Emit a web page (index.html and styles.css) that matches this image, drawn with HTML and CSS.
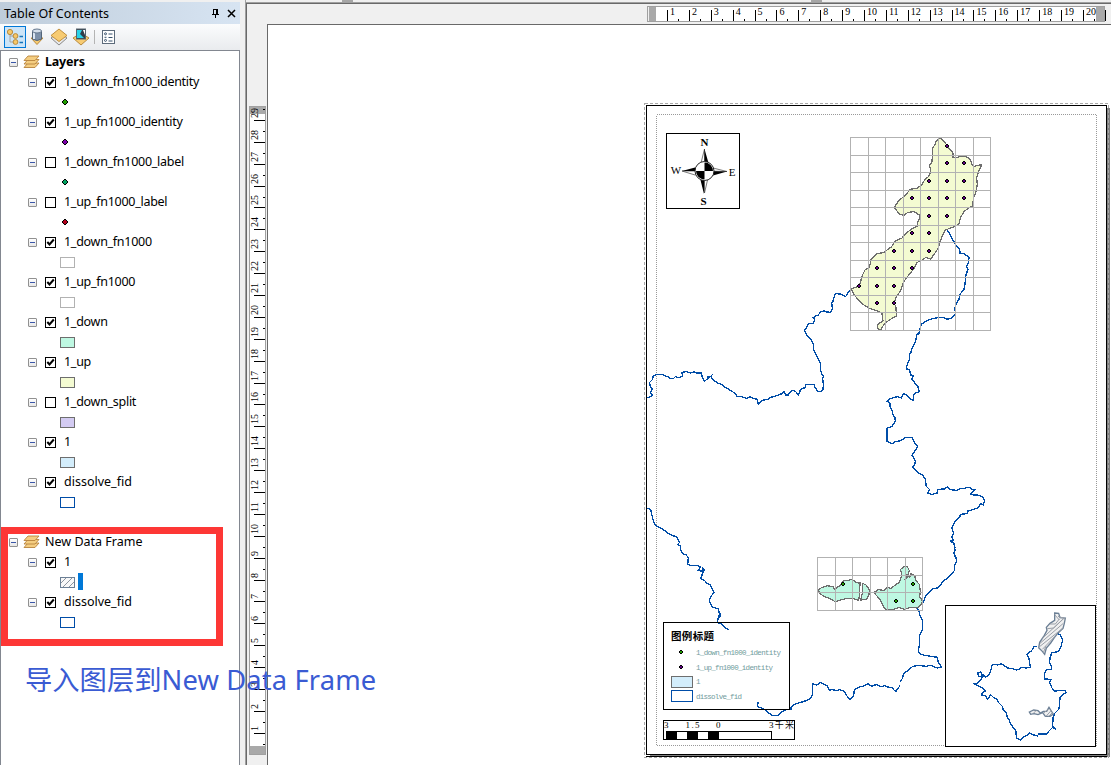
FILE: index.html
```html
<!DOCTYPE html>
<html lang="zh">
<head>
<meta charset="utf-8">
<title>Table Of Contents</title>
<link rel="stylesheet" href="styles.css">
</head>
<body>
<div class="app">
  <aside class="toc">
    <header class="titlebar">
      <span class="title">Table Of Contents</span>
      <svg class="pin" width="9" height="11" viewBox="0 0 9 11"><path d="M2.5 6V1.5H6.5V6M5.5 1V6M0.5 6.5H8M4.5 7V10" /></svg>
      <svg class="close" width="9" height="9" viewBox="0 0 9 9"><path d="M1 1L8 8M8 1L1 8"/></svg>
    </header>
    <div class="toolbar">
      <span class="tool active"><svg width="20" height="20" viewBox="0 0 20 20"><path d="M5 6V15H9M5 9H9" fill="none" stroke="#a4a4a4"/><circle cx="5" cy="5" r="2.6" fill="#f7c869" stroke="#b98a3c"/><circle cx="10.5" cy="9" r="2.4" fill="#f7c869" stroke="#b98a3c"/><circle cx="10.5" cy="15" r="2.4" fill="#f7c869" stroke="#b98a3c"/><path d="M14.5 9.5H18M14.5 15.5H18" stroke="#1673b9" stroke-width="1.5"/></svg></span>
      <span class="tool"><svg width="20" height="20" viewBox="0 0 20 20"><path d="M4 11L10 17.5L16 11Z" fill="#f7cb72" stroke="#b98a3c"/><path d="M5.5 4V12Q10 15 14.5 12V4Z" fill="#7d91aa" stroke="#536579"/><path d="M7 5V12" stroke="#dce6f2" stroke-width="2"/><ellipse cx="10" cy="4" rx="4.5" ry="2" fill="#d5dfeb" stroke="#65788e"/></svg></span>
      <span class="tool"><svg width="20" height="20" viewBox="0 0 20 20"><path d="M2 11L10 5L18 11L10 18Z" fill="#e8e8e8" stroke="#8a8a8a"/><path d="M2 8.5L10 2L18 8.5L10 14.5Z" fill="#f7cb72" stroke="#c18f3c"/></svg></span>
      <span class="tool"><svg width="20" height="20" viewBox="0 0 20 20"><path d="M2 11L10 6L18 11L10 18Z" fill="#f7cb72" stroke="#b98a3c"/><rect x="5.5" y="2" width="9" height="10" fill="#303d48" stroke="#56646f"/><path d="M6 3H11L9 7L13 11H6Z" fill="#29d3e8"/><path d="M12 3H14V8Z" fill="#fff"/></svg></span>
      <span class="divider"></span>
      <span class="tool"><svg width="20" height="20" viewBox="0 0 20 20"><rect x="3.500" y="3.5" width="12" height="13" fill="#fff" stroke="#5c6b7b"/><path d="M9.500 7H13.500M9.500 10.5H13.500M9.500 14H13.500" stroke="#37516c"/><circle cx="6.500" cy="6.8" r="1" fill="none" stroke="#37516c"/><circle cx="6.500" cy="13.4" r="1" fill="none" stroke="#37516c"/><path d="M5.500 10.3H7.500" stroke="#37516c"/></svg></span>
    </div>
    <div class="tree" id="tree"></div>
    <div class="highlight"></div>
  </aside>

  <main class="layout">
    <div class="topedge"><i class="nub nub-a"></i><i class="nub nub-b"></i></div>
    <div class="hruler"><div class="hscale" id="hscale"></div></div>
    <div class="work">
      <div class="vruler"><div class="vscale"><div class="vticks" id="vscale"></div></div></div>
      <svg class="canvas" width="843" height="740" viewBox="268 25 843 740">
        <!-- sheet, shadow and margins -->
        <rect x="1107" y="108" width="3" height="649" fill="#808080"/>
        <rect x="650" y="755" width="460" height="2" fill="#808080"/>
        <path d="M646 756.5H1107" stroke="#000"/>
        <rect x="644.5" y="103.5" width="464" height="654" class="print"/>
        <rect x="646.5" y="105.5" width="460" height="649" class="frame"/>
        <rect x="656.5" y="114.5" width="440" height="631" class="margin"/>

        <!-- catchment outlines -->
        <g transform="translate(640 220) scale(.33333)"><path class="river" d="M630 212L624 218 619 227 616 230 604 224 600 222 586 221 580 237 579 244 575 247 577 266 571 277 560 276 553 273 542 275 535 285 526 288 520 293 524 300 520 311 507 310 501 319 500 325 493 330 497 340 503 349 514 359 519 370 521 377 521 391 528 404 536 420 541 430 541 447 545 462 551 468 548 475 550 492 549 510 541 515 533 513 528 506 523 498 522 493 498 493 495 503 481 508 480 515 475 524 467 515 458 511 449 517 445 525 437 525 432 515 426 521 412 526 390 533 385 538 367 541 355 552 351 538 337 534 331 530 319 535 305 530 291 529 285 520 273 512 253 500 248 494 235 490 227 485 219 479 214 472 215 467 208 472 203 470 205 476 193 483 187 472 184 459 170 459 162 456 151 459 140 455 126 457 127 468 117 473 106 470 101 475 91 475 84 470 74 467 67 464 48 464 40 467 38 478 29 487 31 500 38 506 32 518 37 526 28 532 22 532"/></g>
        <g transform="translate(840 125) scale(.33333)"><path class="river" d="M320 312L329 327 340 347 347 360 359 371 360 384 373 387 387 397 386 411 380 424 384 432 377 453 375 476 372 493 359 509 357 524 349 534 345 547 346 568 331 581 320 583 309 577 294 578 276 581 258 588 245 597 241 604 239 624 230 630 227 648 222 659"/></g>
        <g transform="translate(860 320) scale(.33333)"><path class="river" d="M181 22L179 37 171 43 166 67 155 86 153 97 148 101 148 120 139 140 141 147 148 150 153 165 160 168 155 176 160 182 167 192 173 198 178 215 165 219 160 225 160 241 152 238 145 229 130 220 124 234 112 230 100 233 88 237 82 244 90 249 90 259 96 270 99 284 105 293 106 304 96 319 81 325 81 364 96 372 105 365 123 362 136 353 157 352 163 368 173 379 166 391 156 405 166 424 163 437 157 442 175 458 188 466 197 479 198 498 208 508 204 519 215 524 231 519 234 508 253 507 263 500 270 509 289 511 302 506 315 505 321 502 332 503 334 509 344 510 335 518 332 524 359 526 368 531 374 544 369 555 363 551 353 564 324 573 321 581 302 583 299 591 285 603 276 624 281 641 276 651 279 660 271 663 283 672 285 691 283 705 289 718"/></g>
        <g transform="translate(900 540) scale(.33333)"><path class="river" d="M151 3L161 8 165 22 162 40 167 50 170 63 163 76 164 91 149 107 143 115 132 121 119 138 113 144 99 146 90 155 77 168 69 188M50 201L56 211 60 227 68 244 67 270 59 286 59 310 55 331 59 341 73 346 113 352 114 366 125 381 112 384 92 376 78 379 54 376 37 380 26 390 10 401 8 414 0 426"/></g>
        <g transform="translate(640 610) scale(.33333)"><path class="river" d="M780 227L768 244 762 240 758 233 743 231 734 226 723 231 710 223 695 229 684 221 674 227 659 231 643 239 641 258 630 268 621 258 613 244 598 239 588 242 579 239 568 240 560 226 541 217 531 225 518 221 518 254 513 263 503 270 490 275 475 279 461 284 453 291 453 297 438 299 423 307 416 316 398 317 383 307 374 298 358 292 352 287 355 275M235 1L239 13 232 29 234 38 246 43 256 53 266 59"/></g>
        <g transform="translate(640 490) scale(.33333)"><path class="river" d="M22 55L32 58 35 72 39 88 43 100 50 109 63 115 74 122 84 130 102 138 112 143 118 158 113 163 121 168 123 182 128 191 139 195 145 204 143 223 155 227 173 227 182 231 175 241 187 244 187 234 193 240 181 266 194 272 200 279 212 286 222 307 211 322 208 332 217 351 234 356 242 375 233 390"/></g>

        <!-- upper catchment -->
        <path class="basin up" transform="translate(840 125) scale(.33333)" d="M300 39L310 46 321 61 331 75 339 84 339 97 355 97 362 93 373 94 384 97 393 108 396 119 401 124 425 119 417 138 413 150 410 157 412 178 407 204 401 216 398 242 387 249 372 259 361 279 357 295 346 304 331 309 315 316 308 330 299 352 295 369 281 390 272 402 258 397 248 404 232 412 221 432 208 448 191 470 181 498 169 516 162 533 168 547 169 573 151 583 136 594 126 607 123 614 112 611 114 598 129 587 126 565 110 557 89 550 67 537 50 519 38 502 34 492 58 483 67 451 75 435 88 428 93 404 110 386 130 383 154 366 167 347 185 340 200 324 216 311 231 304 234 288 240 279 237 269 222 260 204 262 192 271 178 267 163 247 175 229 187 218 199 207 211 193 232 189 244 181 254 165 267 153 272 139 269 121 276 110 278 82 277 69 285 60 288 48Z"/>
        <!-- lower catchment -->
        <g transform="translate(640 490) scale(.33333)">
          <path class="basin down" d="M534 301L544 293 562 287 580 291 583 299 599 287 610 273 635 269 646 274 647 278 660 279 659 307 656 331 639 326 619 326 600 330 587 336 572 327 551 319 541 311ZM668 280L678 285 688 299 687 315 679 328 662 330 667 311ZM703 307L715 299 732 301 742 292 753 295 765 286 779 276 785 257 782 238 792 229 802 230 808 242 804 253 809 261 813 251 825 257 826 270 838 283 841 305 839 320 848 334 843 344 831 354 813 352 795 358 777 353 757 359 737 358 728 346 721 329 708 315Z"/>
          <path class="basin" d="M793 270L799 262 798 253M795 249L804 259 797 266M688 307H703"/>
        </g>

        <path class="grid" d="M850.5 137V331M868.5 137V331M885.5 137V331M903.5 137V331M920.5 137V331M938.5 137V331M955.5 137V331M973.5 137V331M990.5 137V331M850 137.5H991M850 155.5H991M850 172.5H991M850 190.5H991M850 207.5H991M850 225.5H991M850 242.5H991M850 260.5H991M850 277.5H991M850 295.5H991M850 312.5H991M850 330.5H991M817.5 557V611M835.5 557V611M852.5 557V611M870.5 557V611M887.5 557V611M905.5 557V611M922.5 557V611M817 557.5H923M817 575.5H923M817 592.5H923M817 610.5H923"/>
        <g id="points"></g>

        <!-- compass -->
        <rect x="666.5" y="133.5" width="73" height="75" class="frame white"/>
        <g class="compass">
          <path class="fine" d="M704.5 149L701 163 704.5 171ZM704.5 193L707.5 180 704.5 171ZM682 171L695 175 704 171ZM727 171.500L713 168 704 171Z"/>
          <path d="M704.5 149L708.500 163 704.5 171ZM704 194L700.5 180 704.5 171ZM682 171L695 167.500 704 171ZM727 171.500L713 175.500 704 171Z"/>
          <circle class="fine ring" cx="704.5" cy="171" r="9.500"/>
          <path d="M704.500 171V162.500A8.500 8.500 0 0 1 713 171ZM704.500 171V179.500A8.500 8.500 0 0 1 696 171Z"/>
          <text x="704.500" y="146" class="bold">N</text><text x="676" y="174">W</text><text x="732" y="176">E</text><text x="703.500" y="205" class="bold">S</text>
        </g>

        <!-- legend -->
        <g class="frame"><rect x="663.5" y="622.5" width="126" height="87"/></g>
        <text x="671" y="639.500" class="legend-title" textLength="43">图例标题</text>
        <g class="legend">
          <text x="696" y="655" textLength="85">1_down_fn1000_identity</text>
          <text x="696" y="670" textLength="77">1_up_fn1000_identity</text>
          <text x="696" y="684">1</text>
          <text x="696" y="699" textLength="46">dissolve_fid</text>
        </g>
        <rect x="671.5" y="676.5" width="21" height="11" fill="#d3edfb" stroke="#6e6e6e" shape-rendering="crispEdges"/>
        <rect x="671.5" y="690.5" width="21" height="11" fill="#fff" stroke="#004da8" shape-rendering="crispEdges"/>

        <!-- scale bar -->
        <rect x="663.5" y="720.5" width="131" height="19" class="frame"/>
        <rect x="666.5" y="731.5" width="105" height="8" class="frame"/>
        <path d="M666 731H677V740H666ZM687 731H698V740H687ZM708 731H719V740H708Z"/>
        <g class="scale"><text x="664" y="728">3</text><text x="685.500" y="728" textLength="14">1.5</text><text x="716" y="728">0</text><text x="769" y="728" textLength="25">3千米</text></g>

        <!-- overview frame -->
        <rect x="945.5" y="605.5" width="150" height="141" class="frame white"/>
        <g transform="translate(900 540) scale(.33333)">
          <path class="river" d="M412 320L402 319 395 332 380 343 387 356 391 382 379 384 365 382 358 387 350 390 336 386 322 384 311 375 303 371 293 375 284 373 276 376 272 392 265 407 257 411 250 403 244 410 235 408 233 398 241 396 246 402 249 410 240 421 233 430 223 432 235 438 248 444 256 453 246 459 246 467 256 467 263 478 269 471 271 463 281 473 290 478 295 487 307 499 310 510 318 517 322 532 328 540 332 553 342 565 348 573 349 594 362 600 371 590 384 585 388 578 399 584 412 588 416 582 441 582 447 573 457 563 468 568 458 560 459 533 464 520 477 507 479 482 481 470 487 465 498 458 494 451 476 451 463 454 456 444 449 428 454 418 435 417 433 404 439 388 454 388 455 378 449 370 450 352 456 338 475 335 483 319 488 300 480 284 472 279"/>
          <g class="hatch">
            <path d="M464 219L476 220 480 233 496 234 493 250 489 265 475 278 463 293 452 309 439 324 434 343 427 334 416 323 419 307 433 286 441 271 439 262 450 250 464 241Z"/>
            <path class="thin" d="M464 224L478 240M450 252L466 252 478 237M442 266L461 264 488 238M427 295L492 235M420 310L490 250M416 322L488 265M427 328L464 290M474 229L496 236M430 338L438 318"/>
            <path d="M388 516L401 510 414 512 421 519 430 514 440 514 447 502 454 513 460 522 450 529 436 529 428 518 414 524 402 521 392 523Z"/>
            <path class="thin" d="M400 520L409 511M431 519L445 508M438 529L455 510M446 529L457 518"/>
          </g>
        </g>
      </svg>
    </div>
  </main>
  <div class="note">导入图层到<span>New Data Frame</span></div>
</div>
<script src="app.js"></script>
</body>
</html>
```
FILE: styles.css
```css
* { box-sizing: border-box; }
body { margin: 0; background: #f0f0f0; font-family: "Noto Sans", "Noto Sans CJK SC", sans-serif; color: #000; }
svg { display: block; flex: none; }
.app { position: relative; display: flex; width: 1111px; height: 765px; overflow: hidden; }
.toc { position: relative; display: flex; flex-direction: column; width: 240px; flex: none; padding-top: 2px; }
.titlebar { display: flex; align-items: center; height: 22px; padding: 0 4px; background: linear-gradient(90deg, #bfcddb, #d7e4f2); }
.title { flex: 1; font-size: 12.5px; letter-spacing: .04px; white-space: nowrap; }
.titlebar svg { fill: none; stroke: #000; }
.pin { margin-right: 7px; shape-rendering: crispEdges; }
.close { stroke-width: 1.5; }
.toolbar { display: flex; align-items: center; height: 26px; padding-left: 4px; background: linear-gradient(#fbfcfd, #e9ebee); }
.tool { display: flex; align-items: center; justify-content: center; width: 22px; height: 22px; }
.tool.active { border: 1px solid #0078d7; background: #cce4f7; }
.divider { width: 1px; height: 14px; margin: 0 3px 0 2px; background: #b4b4b4; }
.tree { flex: 1; padding-top: 1px; border: 1px solid #828790; border-bottom: 0; background: #fff; font-size: 12.5px; }
.row { display: flex; align-items: center; height: 20px; white-space: nowrap; }
.row.group { padding-left: 8px; }
.row.layer { padding-left: 27px; }
.row.symbol { padding-left: 59px; }
.row.strong { font-weight: 700; letter-spacing: -.2px; }
.label { display: block; line-height: 20px; }
.layer .label { margin-left: 8px; }
.layer .tight { letter-spacing: -.28px; }
.group .label { margin-left: 5px; }
.toggle { position: relative; width: 9px; height: 9px; flex: none; border: 1px solid #919191; border-radius: 1px; background: linear-gradient(#fff, #e6e6e6); }
.toggle::after { content: ""; display: block; width: 5px; height: 1px; margin: 3px 1px; background: #3a57a8; }
.stack { margin-left: 5px; }
.check { width: 11px; height: 11px; margin-left: 8px; flex: none; border: 1px solid #000; background: #fff; }
.check svg { fill: none; stroke: #000; stroke-width: 2; }
.swatch { width: 15px; height: 11px; border: 1px solid; }
.cursor { width: 5px; height: 17px; margin: -2px 0 0 3px; background: #0078d7; }
.highlight { position: absolute; left: 1px; top: 527px; width: 222px; height: 119px; border: 7px solid #fd3735; }
.layout { display: flex; flex-direction: column; width: 866px; margin-left: 5px; border-left: 1px solid #a0a0a0; }
.topedge { position: relative; height: 4px; flex: none; border-bottom: 1px solid #696969; box-shadow: inset 0 -1px #a0a0a0; }
.nub { position: absolute; top: 0; height: 2px; width: 11px; background: #a6a6a6; }
.nub-a { left: 96px; }
.nub-b { left: 565px; }
.hruler { height: 19px; flex: none; padding: 2px 0 0 400px; border-left: 1px solid #696969; overflow: hidden; }
.hscale { display: flex; position: relative; width: 458px; height: 16px; padding-left: 19px; border: 1px solid #a0a0a0; background: linear-gradient(90deg, transparent 1px, #a9a9a9 1px, #a9a9a9 8px, #fff 8px, #fff 448px, #a9a9a9 448px); font: 10px/10px "Liberation Serif", serif; }
.hcell { position: relative; width: 21.9px; height: 11px; margin-top: 3px; padding-left: 2px; flex: none; border-left: 1px solid #000; }
.hcell span { display: block; margin-top: -3px; }
.hcell::after { content: ""; position: absolute; left: 10px; bottom: 0; width: 1px; height: 2px; background: #000; }
.work { display: flex; flex: 1; min-height: 0; border-left: 1px solid #696969; }
.vruler { width: 21px; flex: none; padding: 82px 0 0 2px; border-top: 1px solid #f0f0f0; }
.vscale { width: 17px; height: 649px; overflow: hidden; border: 1px solid #a0a0a0; background: linear-gradient(#a9a9a9 7px, #fff 7px, #fff 639px, #a9a9a9 639px); font: 10px/10px "Liberation Serif", serif; }
.vticks { margin-top: -8px; }
.vcell { position: relative; display: flex; align-items: flex-end; height: 21.9px; padding: 0 0 3px 0; }
.vcell span { writing-mode: vertical-rl; transform: rotate(180deg); height: 12px; text-align: left; }
.vcell::before { content: ""; position: absolute; left: 4px; bottom: 0; width: 11px; height: 1px; background: #000; }
.vcell::after { content: ""; position: absolute; left: 13px; top: 10px; width: 2px; height: 1px; background: #000; }
.vcell.last::before { display: none; }
.canvas { background: #fff; outline: 1px solid #696969; margin-top: 2px; }
.frame { fill: none; stroke: #000; shape-rendering: crispEdges; }
.white { fill: #fff; }
.print { fill: none; stroke: #a8a8a8; stroke-dasharray: 3 2; shape-rendering: crispEdges; }
.margin { fill: none; stroke: #999; stroke-dasharray: 1 1; shape-rendering: crispEdges; }
.river { fill: none; stroke: #004da8; stroke-width: 4; shape-rendering: crispEdges; }
.basin { fill: none; stroke: #6e6e6e; stroke-width: 3.8; shape-rendering: crispEdges; }
.basin.up { fill: #f4fbd2; }
.basin.down { fill: #bef8e2; }
.grid { fill: none; stroke: #b2b2b2; shape-rendering: crispEdges; }
.compass text { font: 11px "Liberation Serif", serif; text-anchor: middle; }
.compass .bold { font-weight: 700; }
.fine { fill: #fff; stroke: #222; stroke-width: .6; }
.ring { stroke-width: 1; }
.legend-title { font: 700 10.5px "Noto Sans CJK SC", sans-serif; }
.legend { font: 7.5px "Liberation Mono", monospace; fill: #719b9d; }
.scale { font: 9px "Liberation Serif", "Noto Sans CJK SC", serif; }
.hatch { fill: #f0f0f0; stroke: #6b7f95; stroke-width: 4; }
.hatch .thin { fill: none; stroke: #9a9fa8; stroke-width: 3; }
.note { position: absolute; left: 25px; top: 660px; font-size: 27.3px; line-height: 40px; color: #3a5bd3; white-space: nowrap; }
.note span { letter-spacing: .15px; }
```
FILE: app.js
```js
const stack = '<svg class="stack" width="17" height="14" viewBox="0 0 17 14"><g fill="#f4cd80" stroke="#b8833d" stroke-width=".9"><path d="M1 12.500L5 8H16L12 12.500Z"/><path d="M1 9L5 4.500H16L12 9Z"/><path d="M1 5.500L5 1H16L12 5.500Z"/></g></svg>';
const tick = '<svg width="9" height="9" viewBox="0 0 9 9"><path d="M1.300 4L3.500 6.500L7.800 1.500"/></svg>';
const toggle = '<i class="toggle"></i>';
const group = (name, strong) => `<div class="row group ${strong ? 'strong' : ''}">${toggle}${stack}<span class="label">${name}</span></div>`;
const layer = (name, on) => `<div class="row layer">${toggle}<i class="check">${on ? tick : ''}</i><span class="label ${name.startsWith('1_') ? 'tight' : ''}">${name}</span></div>`;
const dot = c => `<div class="row symbol"><svg width="11" height="8" viewBox="0 0 11 8"><path d="M5 1L8 4L5 7L2 4Z" fill="${c}" stroke="#000"/></svg></div>`;
const box = (fill, line) => `<div class="row symbol"><i class="swatch" style="background:${fill};border-color:${line}"></i></div>`;
const hatch = '<div class="row symbol"><svg width="15" height="11" viewBox="0 0 15 11"><rect x=".5" y=".5" width="14" height="10" fill="#f8f8f8" stroke="#6b7f95"/><path d="M1 6L6 1M3 10L12 1M9 10L14 5" fill="none" stroke="#8c949e"/></svg><i class="cursor"></i></div>';
document.getElementById('tree').innerHTML = [
  group('Layers', true),
  layer('1_down_fn1000_identity', 1), dot('#1f9c00'),
  layer('1_up_fn1000_identity', 1), dot('#7a00a8'),
  layer('1_down_fn1000_label', 0), dot('#00a05f'),
  layer('1_up_fn1000_label', 0), dot('#b0001c'),
  layer('1_down_fn1000', 1), box('#fff', '#b2b2b2'),
  layer('1_up_fn1000', 1), box('#fff', '#b2b2b2'),
  layer('1_down', 1), box('#bef8e2', '#6e6e6e'),
  layer('1_up', 1), box('#f4fbd2', '#6e6e6e'),
  layer('1_down_split', 0), box('#d3cbf2', '#6e6e6e'),
  layer('1', 1), box('#d3edfb', '#6e6e6e'),
  layer('dissolve_fid', 1), box('#fff', '#004da8'),
  '<div class="row"></div>',
  group('New Data Frame'),
  layer('1', 1), hatch,
  layer('dissolve_fid', 1), box('#fff', '#004da8')
].join('');

let h = '', v = '';
for (let i = 1; i <= 20; i++) h += `<div class="hcell"><span>${i}</span></div>`;
for (let i = 29; i >= 1; i--) v += `<div class="vcell"><span>${i}</span></div>`;
document.getElementById('hscale').innerHTML = h + '<div class="hcell"></div>';
document.getElementById('vscale').innerHTML = v + '<div class="vcell last"></div>';

const purple = [[947,146],[947,163],[964,163],[929,181],[947,181],[964,181],[912,198],[929,198],[947,198],[964,198],[929,216],[947,216],[912,233],[929,233],[894,251],[912,251],[929,251],[877,268],[894,268],[912,268],[859,286],[877,286],[894,286],[877,303],[894,303],[681,667]];
const green = [[843,584],[913,584],[896,601],[913,601],[681,652]];
const mark = (p, c) => `<rect x="${p[0] - 1}" y="${p[1] - 2}" width="2" height="4"/><rect x="${p[0] - 2}" y="${p[1] - 1}" width="4" height="2"/><rect x="${p[0] - 1}" y="${p[1] - 1}" width="2" height="2" fill="${c}"/>`;
document.getElementById('points').innerHTML = purple.map(p => mark(p, '#5c007e')).join('') + green.map(p => mark(p, '#1f9c00')).join('');
```
